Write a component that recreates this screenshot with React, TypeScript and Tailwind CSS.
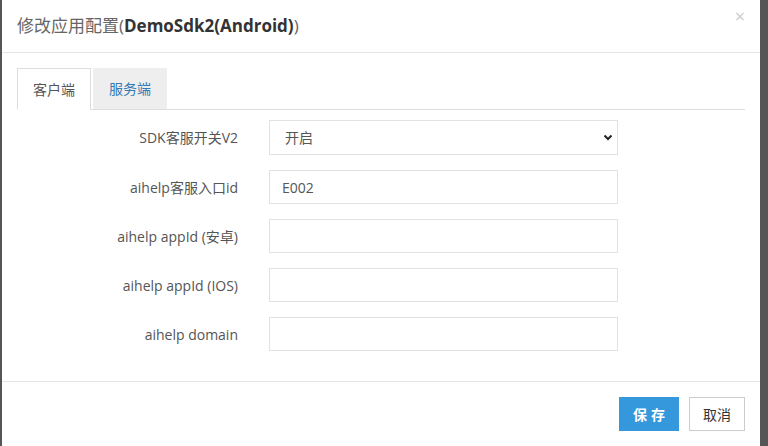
import { useState } from "react";

const font = {
  fontFamily: '"Open Sans", "Noto Sans CJK SC", sans-serif',
};

const fields = [
  { label: "aihelp客服入口id", value: "E002" },
  { label: "aihelp appId (安卓)", value: "" },
  { label: "aihelp appId (IOS)", value: "" },
  { label: "aihelp domain", value: "" },
];

function Row({ label, children }: { label: string; children: React.ReactNode }) {
  return (
    <div className="mb-[15px] flex items-center">
      <label className="w-[221px] text-right text-[14px] text-[#555]">{label}</label>
      <div className="ml-[31px] w-[349px]">{children}</div>
    </div>
  );
}

const activeTab =
  "-mb-px mr-[2px] flex h-[42px] w-[74px] cursor-pointer items-center justify-center border border-b-white border-[#ddd] bg-white text-[14px] text-[#555]";
const idleTab =
  "mr-[2px] flex h-[41px] w-[74px] cursor-pointer items-center justify-center bg-[#eee] text-[14px] text-[#337ab7]";

export default function App() {
  const [tab, setTab] = useState("client");
  const [values, setValues] = useState(fields.map((f) => f.value));

  return (
    <div className="flex h-[446px] w-[768px] overflow-hidden bg-[#565656]" style={font}>
      <div className="ml-[2px] flex w-[758px] flex-col bg-white">
        <header className="relative flex h-[53px] items-center border-b border-[#e5e5e5] px-[15px]">
          <h4 className="text-[17px] text-[#666]">
            修改应用配置(<b className="font-bold text-[#333]">DemoSdk2(Android)</b>)
          </h4>
          <button
            type="button"
            className="absolute right-[15px] top-[7px] text-[18px] leading-none text-[#ccc]"
          >
            ×
          </button>
        </header>

        <div className="p-[15px]">
          <ul className="flex border-b border-[#ddd]">
            <li onClick={() => setTab("client")} className={tab === "client" ? activeTab : idleTab}>
              客户端
            </li>
            <li onClick={() => setTab("server")} className={tab === "server" ? activeTab : idleTab}>
              服务端
            </li>
          </ul>

          <div className="pt-[10px]">
            <Row label="SDK客服开关V2">
              <div className="relative">
                <select className="h-[35px] w-full appearance-none border border-[#e2e2e2] bg-white pl-[15px] text-[14px] text-[#555] outline-none">
                  <option>开启</option>
                  <option>关闭</option>
                </select>
                <svg
                  className="pointer-events-none absolute right-[5px] top-[14px]"
                  width="10"
                  height="7"
                  viewBox="0 0 10 7"
                >
                  <path d="M1.5 1.5 L5 5 L8.5 1.5" fill="none" stroke="#222" strokeWidth="2" />
                </svg>
              </div>
            </Row>
            {fields.map((f, i) => (
              <Row key={f.label} label={f.label}>
                <input
                  value={values[i]}
                  onChange={(e) => setValues(values.map((v, j) => (j === i ? e.target.value : v)))}
                  className="h-[34px] w-full border border-[#e2e2e2] px-[12px] text-[14px] text-[#555] outline-none"
                />
              </Row>
            ))}
          </div>
        </div>

        <footer className="flex justify-end gap-[10px] border-t border-[#e5e5e5] px-[15px] pt-[15px]">
          <button
            type="button"
            className="h-[34px] w-[60px] bg-[#3598dc] pl-[4px] text-[14px] font-semibold tracking-[4px] text-white"
          >
            保存
          </button>
          <button
            type="button"
            className="h-[34px] w-[56px] border border-[#ccc] bg-white text-[14px] text-[#333]"
          >
            取消
          </button>
        </footer>
      </div>
    </div>
  );
}
